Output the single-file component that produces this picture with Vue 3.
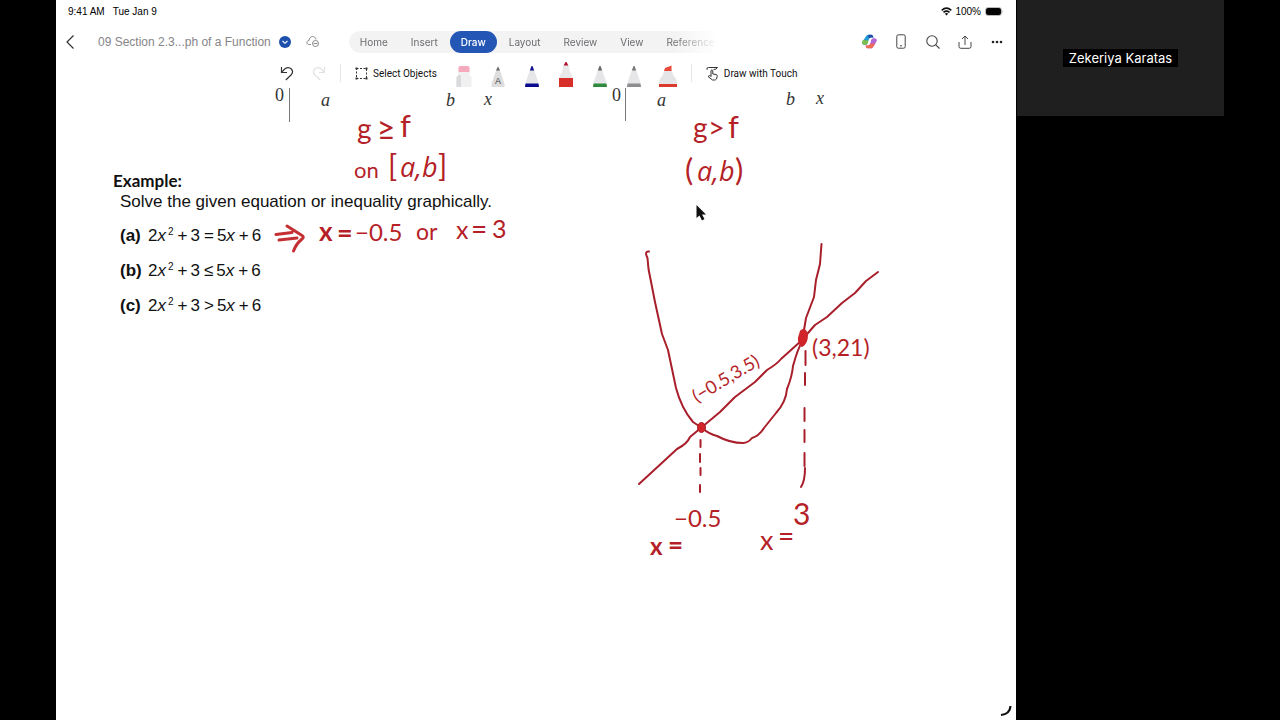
<script setup>
const tabs = ['Home', 'Insert', 'Draw', 'Layout', 'Review', 'View', 'References']
const pens = [
  { name: 'Blue pen', tip: '#15158c', band: '#0b0b8f' },
  { name: 'Red marker', tip: '#b3122f', band: '#d92f2b', wide: true },
  { name: 'Green pencil', tip: '#666', band: '#2e8b3d' },
  { name: 'Grey pencil', tip: '#777', band: '#8d8d90' }
]
const problems = [
  { label: '(a)', sign: '=' },
  { label: '(b)', sign: '≤' },
  { label: '(c)', sign: '>' }
]
</script>

<template>
  <div class="stage">
    <main class="tablet">
      <div class="status">
        <span>9:41 AM</span>
        <span class="date">Tue Jan 9</span>
        <svg class="wifi" width="11" height="9" viewBox="0 0 11 9" fill="none" stroke="#111" stroke-width="1.6">
          <path d="M.7 3.3Q5.5-.9 10.3 3.3M2.5 5.3Q5.5 2.8 8.500 5.300" />
          <path d="M3.800 6.700L5.500 8.500L7.200 6.700Q5.500 5.500 3.800 6.700Z" fill="#111" stroke="none" />
        </svg>
        <span>100%</span>
        <svg class="battery" width="19" height="9" viewBox="0 0 19 9">
          <rect x=".5" y=".5" width="16" height="8" rx="2.500" fill="#fff" stroke="#bbb" />
          <rect x="1" y="1" width="15" height="7" rx="2" fill="#050505" />
          <path d="M17.600 3v3q1.200-1.500 0-3" fill="#999" />
        </svg>
      </div>

      <header class="nav">
        <button class="icon back" aria-label="Back">
          <svg width="10" height="16" viewBox="0 0 10 16" fill="none" stroke="#333" stroke-width="1.200"><path d="M8.500 1.500L2 8L8.500 14.500" /></svg>
        </button>
        <button class="title">09 Section 2.3...ph of a Function</button>
        <svg class="check" width="12" height="12" viewBox="0 0 12 12"><circle cx="6" cy="6" r="6" fill="#1d4fad" /><path d="M3.500 5L6 7.300L8.500 5" fill="none" stroke="#fff" stroke-width="1.100" /></svg>
        <svg class="cloud" width="14" height="13" viewBox="0 0 14 13" fill="none" stroke="#888">
          <path d="M5 9.500H3.200C.2 9.500.1 5.800 3 5.500C3.300 .5 9.300.3 10 4.500" />
          <circle cx="9.500" cy="8.500" r="3" /><path d="M7.500 8.500H11.500" />
        </svg>
        <nav class="tabs">
          <button v-for="t in tabs" :key="t" :class="{ active: t === 'Draw' }">{{ t }}</button>
        </nav>
        <div class="actions">
          <button class="icon" aria-label="Copilot">
            <svg width="17" height="15" viewBox="0 0 18 16">
              <path d="M5.500 2Q6.200.7 8 .7H11Q12.400.8 12.800 2.500L13.200 4H10.500Q9 4 8.500 5.500L7.200 10Q6.700 11.500 5 11.500H3Q.7 11 1.200 8.500Z" fill="#229bd4" />
              <path d="M8 .7H11Q12.400.8 12.800 2.500L13.200 4H10.500Q9.400 4 9 5L7.400 3Z" fill="#2449ac" />
              <path d="M2 6.500L1.200 8.500Q.8 11.300 3 11.500H5Q6.700 11.500 7.200 10L8 7Z" fill="#7fbd4b" />
              <path d="M12.500 14Q11.800 15.300 10 15.300H7Q5.600 15.200 5.200 13.500L4.800 12H7.500Q9 12 9.500 10.500L10.800 6Q11.300 4.500 13 4.500H15Q17.300 5 16.800 7.500Z" fill="#b465d6" />
              <path d="M12.500 14Q11.800 15.300 10 15.300H7Q5.600 15.200 5.200 13.500L4.800 12H7.500Q9 12 9.500 10.500L15.500 10Z" fill="#ee6a54" />
              <path d="M10.500 4H13.500Q11.300 4.500 10.800 6L9.500 10.500Q9 12 7.500 12H5Q6.700 11.500 7.200 10L8.500 5.500Q9 4 10.500 4Z" fill="#fff" />
            </svg>
          </button>
          <button class="icon" aria-label="Mobile view">
            <svg width="10" height="15" viewBox="0 0 10 15" fill="none" stroke="#444"><rect x=".8" y=".8" width="8.400" height="13.400" rx="1.500" /><path d="M4 11.800H6" /></svg>
          </button>
          <button class="icon" aria-label="Search">
            <svg width="14" height="14" viewBox="0 0 14 14" fill="none" stroke="#444" stroke-width="1.100"><circle cx="6" cy="6" r="5.200" /><path d="M9.800 9.800L13.500 13.500" /></svg>
          </button>
          <button class="icon" aria-label="Share">
            <svg width="14" height="14" viewBox="0 0 14 14" fill="none" stroke="#444"><path d="M7 10V1M4 4L7 1L10 4M1 7V11.500Q1 13.300 2.800 13.300H11.200Q13 13.300 13 11.500V7" /></svg>
          </button>
          <button class="icon" aria-label="More">
            <svg width="12" height="4" viewBox="0 0 12 4" fill="#222"><circle cx="2" cy="2" r="1.300" /><circle cx="6" cy="2" r="1.300" /><circle cx="10" cy="2" r="1.300" /></svg>
          </button>
        </div>
      </header>

      <div class="tools">
        <button class="icon undo" aria-label="Undo">
          <svg width="14" height="15" viewBox="0 0 14 15" fill="none" stroke="#333" stroke-width="1.200"><path d="M1.500 1V6.500H7M1.500 6.300L5 2.800Q8.500 .3 11.300 3Q14 6 11 9L5.800 14" /></svg>
        </button>
        <button class="icon redo" aria-label="Redo" disabled>
          <svg width="14" height="15" viewBox="0 0 14 15" fill="none" stroke="#e2e2e2" stroke-width="1.200"><path d="M12.500 1V6.500H7M12.500 6.300L9 2.800Q5.500 .3 2.700 3Q0 6 3 9L8.200 14" /></svg>
        </button>
        <span class="rule"></span>
        <button class="tool select">
          <svg width="13" height="13" viewBox="0 0 13 13" fill="none" stroke="#333"><path d="M1.500 1.500H11.500V11.500H1.500Z" stroke-dasharray="2 1.500" /><path d="M.5 .5h2v2h-2zM10.500 .5h2v2h-2zM.5 10.500h2v2h-2zM10.500 10.500h2v2h-2z" fill="#333" stroke="none" /></svg>
          Select Objects
        </button>
        <div class="pens">
          <button class="pen" aria-label="Eraser">
            <svg width="18" height="26" viewBox="0 0 18 26"><path d="M3.500 5.500Q3.500 4 5 4H13Q14.500 4 14.500 5.500V11H3.500Z" fill="#f5a9bd" /><path d="M3.500 10H14.500V13L16.500 15V25H1.500V15L3.500 13Z" fill="#f0f0f1" /><path d="M1.500 15L3.500 13H6V25H1.500Z" fill="#dadadc" /></svg>
          </button>
          <button class="pen" aria-label="Text pen">
            <svg width="18" height="26" viewBox="0 0 18 26"><path d="M7 8.500L9 4.500L11 8.500L15.500 22V25H2.500V22Z" fill="#dededf" /><path d="M7 8.500L9 4.500L11 8.500Z" fill="#666" /><text x="9" y="22" text-anchor="middle" font-size="9" font-family="Liberation Sans, sans-serif" fill="#444">A</text></svg>
          </button>
          <button v-for="p in pens" :key="p.name" class="pen" :aria-label="p.name">
            <svg v-if="p.wide" width="18" height="26" viewBox="0 0 18 26"><path d="M6.500 3L5 10Q3 12 2.500 16V25H15.500V16Q15 12 13 10L11.500 3Z" fill="#e9e9ea" /><path d="M6.600 3.500L8.500 0H9.500L11.400 3.500Z" :fill="p.tip" /><path d="M2 16H16V25H2Z" :fill="p.band" /></svg>
            <svg v-else width="18" height="26" viewBox="0 0 18 26"><path d="M7 8L3 19L2 25H16L15 19L11 8Z" fill="#e6e6e8" /><path d="M6.800 8.500L8.500 4H9.500L11.200 8.500Z" :fill="p.tip" /><path d="M2.500 21.500H15.500L16 25H2Z" :fill="p.band" /></svg>
          </button>
          <button class="pen" aria-label="Red highlighter">
            <svg width="20" height="26" viewBox="0 0 20 26"><path d="M6 8L5 13Q1 17 1 21V25H19V21Q19 17 15 13L14 8Z" fill="#e5e5e7" /><path d="M6 9L7 6L13.500 3.500V9Z" fill="#e84a3c" /><path d="M1 22H19V25H1Z" fill="#db3b2f" /></svg>
          </button>
        </div>
        <span class="rule after-pens"></span>
        <button class="tool touch">
          <svg width="13" height="15" viewBox="0 0 13 15" fill="none" stroke="#333" stroke-linecap="round" stroke-linejoin="round"><path d="M1 3.500Q0 1.500 2.500 1.500H11.500Q10.500 3.800 8 3.500M5 10V4.500Q5.900 3.300 6.800 4.500V8L10 8.500Q11.700 9 11.200 10.500L10.500 13Q9.800 14 8.500 14H6.500L2 10.500Q2.800 9 5 10" /></svg>
          Draw with Touch
        </button>
      </div>

      <article class="document">
        <h1>Example:</h1>
        <p>Solve the given equation or inequality graphically.</p>
        <ul>
          <li v-for="p in problems" :key="p.label">
            <b>{{ p.label }}</b>
            <span>2<i>x</i><sup>2</sup></span><span class="op">+</span><span>3</span><span class="op">{{ p.sign }}</span><span>5<i>x</i></span><span class="op">+</span><span>6</span>
          </li>
        </ul>
        <svg class="ink" viewBox="56 88 960 632">
          <g class="axis">
            <path d="M289.500 88V122M625.500 88V121" />
            <text x="275" y="101">0</text><text x="612" y="101">0</text>
            <g font-style="italic">
              <text x="321" y="106">a</text><text x="446" y="106">b</text><text x="484" y="105">x</text>
              <text x="657" y="106">a</text><text x="786" y="105">b</text><text x="816" y="104">x</text>
            </g>
          </g>

          <g class="note">
            <text x="357" y="139" font-size="28">g</text><text x="377" y="140" font-size="32">≥</text><text x="400" y="137" font-size="31">f</text>
            <text x="354" y="178" font-size="22">on</text><text x="388" y="177" font-size="30">[</text><text x="400" y="177" font-size="27" class="slant">a,b</text><text x="438" y="177" font-size="30">]</text>
            <text x="693" y="138" font-size="28">g</text><text x="708" y="138" font-size="29">&gt;</text><text x="728" y="138" font-size="31">f</text>
            <text x="685" y="181" font-size="31">(</text><text x="697" y="181" font-size="27" class="slant">a,b</text><text x="735" y="181" font-size="31">)</text>
            <text x="319" y="241" font-size="26" class="heavy">x</text><text x="337" y="242" font-size="27" class="heavy">=</text><text x="355" y="241" font-size="24">−0.5</text>
            <text x="416" y="240" font-size="23">or</text><text x="456" y="239" font-size="25">x</text><text x="471" y="239" font-size="28">=</text><text x="492" y="238" font-size="25">3</text>
            <text x="812" y="356" font-size="23">(3,21)</text>
            <text transform="translate(697 403) rotate(-31)" font-size="18">(−0.5,3.5)</text>
            <text x="674" y="527" font-size="24">−0.5</text><text x="650" y="555" font-size="24" class="heavy">x</text><text x="668" y="554" font-size="26" class="heavy">=</text>
            <text x="793" y="525" font-size="30">3</text><text x="760" y="550" font-size="27">x</text><text x="778" y="546" font-size="28">=</text>
          </g>

          <g class="stroke">
            <path d="M276 234.500L292 232.500M279 240L297 238M287 226L302 235.500Q304.500 237 302 239Q296 244 293.500 251" stroke="#c42f33" stroke-width="3" />
            <path d="M649 251.500Q644 251 647.500 258L648.500 269L655 302L662 334L668 350L676 388C680 403 687 415 693 422L702 428Q709 434 717 436Q730 443 743 443Q748 443 752 438Q759 436 764 428L776 413Q786 402 787 389Q792 377 793 366Q798 348 802 342L806 318L814 297L816 280L820 264L821.500 244" />
            <path d="M639 484L664 461L677 449Q687 444 690 437L702 427L720 412L735 397L755 382L767 370Q777 364 781 359L801 341L815 325L827 317L842 303L855 293L866 281L878 272" />
            <ellipse cx="701.500" cy="427.500" rx="4" ry="5" fill="#d3242a" stroke-width="1" />
            <path d="M801 331Q806 328 807 335Q807 343 802 346Q797 342 800 334Z" fill="#d3242a" stroke="#cc252c" stroke-width="2" />
            <path d="M700.500 440V447M700 454V462M700.500 468V475M700 485V492M805.500 351V365M805 373V385M804.500 408V421M804.500 430V442M804.500 453V466M805 468Q805 481 801 487" />
          </g>

          <path class="cursor" d="M696.500 205V218L699.500 215.500L702 220.500L704.500 219L702 214.500H706Z" />
          <path d="M1001 715Q1010 714 1010.500 706" fill="none" stroke="#111" stroke-width="2.200" />
        </svg>
      </article>
    </main>

    <aside class="call">
      <div class="tile"><span>Zekeriya Karatas</span></div>
    </aside>
  </div>
</template>

<style>
body { margin: 0; background: #000; }
</style>

<style scoped>
* { box-sizing: border-box; }
.stage {
  display: grid;
  grid-template-columns: 56px minmax(0, 1fr) 264px;
  min-height: 100vh;
  background: #000;
  font-family: Inter, "Liberation Sans", sans-serif;
}
.tablet {
  grid-column: 2;
  display: flex;
  flex-direction: column;
  background: #fff;
}
button {
  padding: 0;
  border: 0;
  background: none;
  font: inherit;
  color: inherit;
}
svg { display: block; flex: none; }
.icon { display: flex; align-items: center; justify-content: center; }
.status {
  display: flex;
  align-items: center;
  height: 23px;
  padding: 0 12px;
  font-family: "Liberation Sans", sans-serif;
  font-size: 10px;
  color: #000;
}
.date { margin-left: 8px; }
.wifi { margin: 0 3px 0 auto; }
.battery { margin-left: 4px; }
.nav {
  display: flex;
  align-items: center;
  height: 37px;
  padding: 0 3px 0 9px;
}
.back { width: 10px; }
.title { margin-left: 23px; font-family: "Liberation Sans", sans-serif; font-size: 12px; color: #858588; white-space: nowrap; }
.check { margin-left: 8px; }
.cloud { margin-left: 15px; }
.tabs {
  display: flex;
  gap: 1px;
  flex: 0 1 368px;
  min-width: 0;
  height: 22px;
  margin-left: 29px;
  overflow: hidden;
  border-radius: 11px 0 0 11px;
  background: #f3f3f4;
  font-size: 10px;
  color: #6c6c70;
  mask-image: linear-gradient(to right, #000 88%, transparent);
}
.tabs button { flex: none; padding: 0 11px; }
.tabs .active { border-radius: 11px; background: #2456b5; color: #fff; font-weight: 500; }
.actions { display: flex; align-items: center; margin-left: auto; }
.actions .icon { width: 32px; height: 32px; }
.tools {
  display: flex;
  align-items: center;
  height: 28px;
  padding: 0 0 2px 224px;
  font-family: Roboto, sans-serif;
  font-size: 10px;
  color: #111;
}
.redo { margin-left: 18px; }
.rule { width: 1px; height: 18px; margin: 0 14px; background: #e6e6e6; }
.after-pens { margin-left: 6px; }
.tool { display: flex; align-items: center; gap: 5px; white-space: nowrap; }
.pens { display: flex; align-self: flex-start; margin: 2px 0 0 10px; }
.pen { display: flex; justify-content: center; width: 34px; }
.document {
  position: relative;
  flex: 1;
  padding: 83px 57px 0;
  color: #111;
  font-family: "Liberation Sans", Arial, sans-serif;
  font-size: 17px;
}
h1 { margin: 0; font: bold 17px/20px Lato, sans-serif; }
p { margin: 0 0 0 7px; line-height: 22px; }
ul { margin: 5px 0 0 7px; padding: 0; list-style: none; }
li { display: flex; align-items: baseline; height: 35px; line-height: 35px; }
li b { width: 28px; }
sup { margin-left: 2px; font-size: 10px; line-height: 0; vertical-align: 6px; }
.op { margin: 0 3px 0 4px; }
.ink { position: absolute; top: 0; left: 0; width: 100%; height: auto; overflow: visible; }
.axis { font-family: "Liberation Serif", serif; font-size: 18px; fill: #333; }
.axis path { stroke: #777; }
.note { font-family: Lato, "Open Sans", sans-serif; fill: #b51f28; }
.heavy { font-weight: 700; }
.slant { font-family: "Open Sans", sans-serif; font-style: italic; }
.stroke { fill: none; stroke: #a81f2b; stroke-width: 2; stroke-linecap: round; stroke-linejoin: round; }
.cursor { fill: #111; }
.tile {
  display: flex;
  align-items: center;
  justify-content: center;
  width: 207px;
  height: 116px;
  margin-left: 1px;
  background: #1f1f1f;
}
.tile span { padding: 0 6px; background: #000; color: #fff; font-size: 13px; line-height: 18px; }
</style>
